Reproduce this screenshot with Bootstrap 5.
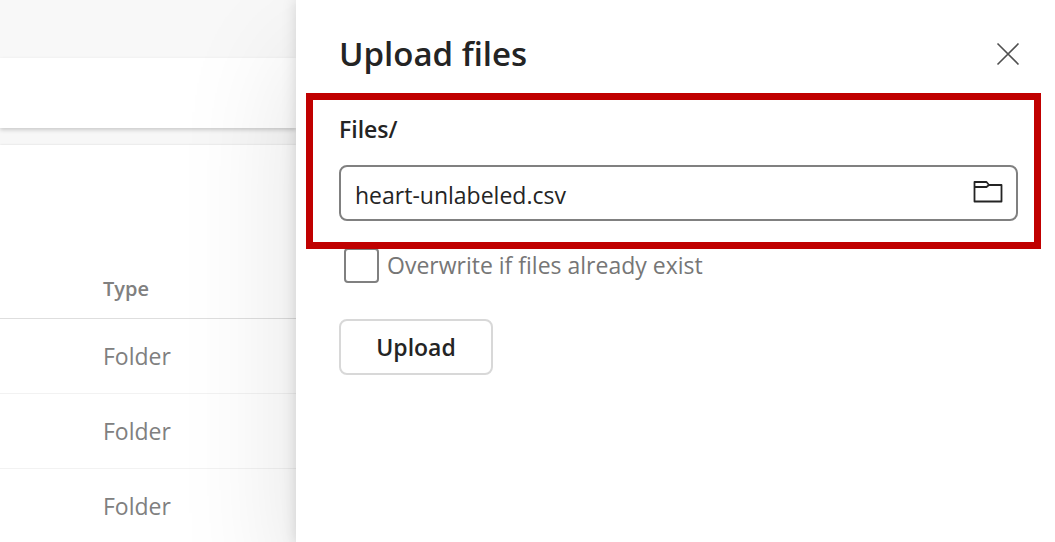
<!DOCTYPE html>
<html lang="en">
<head>
<meta charset="utf-8">
<meta name="viewport" content="width=device-width, initial-scale=1">
<title>Upload files</title>
<link href="https://cdn.jsdelivr.net/npm/bootstrap@5.3.0/dist/css/bootstrap.min.css" rel="stylesheet">
<style>
  body { font-family: "Open Sans", "Noto Sans", sans-serif; font-size: 23px; line-height: 32px; color: #242424; background: #fff; }
  .explorer { flex: 0 0 296px; }
  .topbar { height: 58px; background: #f8f8f8; }
  .toolbar { height: 70px; background: #fff; box-shadow: 0 2px 4px rgba(0,0,0,.18); }
  .gutter { height: 17px; background: #f7f7f7; }
  .file-pane { box-shadow: 0 0 2px rgba(0,0,0,.12); padding-top: 115px; }
  .file-table { table-layout: fixed; }
  .file-table td, .file-table th { height: 75px; padding: 0; vertical-align: middle; background: transparent; border-bottom: 1px solid #f2f2f2; color: #808080; }
  .file-table th { height: 58px; font-weight: 600; font-size: 20px; border-bottom-color: #dedede; }
  .file-table .name-col { width: 103px; }
  .drawer { background: #fff; box-shadow: 0 0 14px rgba(0,0,0,.14), 0 56px 112px rgba(0,0,0,.12); }
  .drawer-head { height: 93px; padding: 14px 34px 0 43px; }
  .drawer-title { font-size: 33px; line-height: 44px; font-weight: 600; }
  .close-btn { width: 26px; height: 26px; }
  .marked { border: 7px solid #c00000; margin: 0 14px 0 10px; padding: 13px 16px 21px 26px; }
  .path-label { font-weight: 600; margin-bottom: 20px; }
  .file-box { height: 56px; border: 2px solid #808080; border-radius: 8px; padding: 0 13px 0 14px; }
  .file-box input { font-size: 23px; line-height: 32px; color: #242424; padding: 3px 0 0; }
  .drawer-form { padding-left: 43px; }
  .overwrite { gap: 8px; color: #767676; height: 34px; margin: -1px 0 0 5px; }
  .overwrite .form-check-input { width: 35px; height: 35px; border: 2px solid #808080; border-radius: 4px; }
  .upload-btn { width: 154px; height: 56px; margin-top: 37px; border: 2px solid #d8d8d8; border-radius: 8px; background: #fff; font-size: 23px; font-weight: 600; color: #242424; }
</style>
</head>
<body>
<div class="d-flex min-vh-100 overflow-hidden">
  <main class="explorer">
    <div class="topbar"></div>
    <div class="toolbar position-relative"></div>
    <div class="gutter"></div>
    <section class="file-pane">
      <table class="table file-table mb-0">
        <thead><tr><th class="name-col"></th><th scope="col">Type</th></tr></thead>
        <tbody>
          <tr><td></td><td>Folder</td></tr>
          <tr><td></td><td>Folder</td></tr>
          <tr><td></td><td>Folder</td></tr>
        </tbody>
      </table>
    </section>
  </main>
  <aside class="drawer flex-fill position-relative">
    <header class="drawer-head d-flex align-items-center justify-content-between">
      <h1 class="drawer-title mb-0">Upload files</h1>
      <button type="button" class="close-btn btn border-0 p-0 d-flex" aria-label="Close">
        <svg width="26" height="26" viewBox="0 0 26 26" fill="none" stroke="#505050" stroke-width="1.6"><path d="M2.500 2.500l21 21M23.500 2.500l-21 21"/></svg>
      </button>
    </header>
    <form>
      <div class="marked position-relative z-1">
        <label class="path-label d-block" for="file">Files/</label>
        <div class="file-box d-flex align-items-center">
          <input id="file" type="text" class="form-control border-0 shadow-none bg-transparent" value="heart-unlabeled.csv">
          <button type="button" class="btn border-0 p-0 d-flex" aria-label="Browse">
            <svg width="30" height="24" viewBox="0 0 30 24" fill="none" stroke="#242424" stroke-width="1.800" stroke-linejoin="round"><path d="M1.500 1H13.500L16 4H28.500V20.500H1.500ZM1.500 6H13.500L16 4"/></svg>
          </button>
        </div>
      </div>
      <div class="drawer-form">
        <div class="overwrite d-flex align-items-center">
          <input class="form-check-input m-0 flex-shrink-0" type="checkbox" id="overwrite">
          <label for="overwrite">Overwrite if files already exist</label>
        </div>
        <button type="button" class="upload-btn btn p-0">Upload</button>
      </div>
    </form>
  </aside>
</div>
<script src="https://cdn.jsdelivr.net/npm/bootstrap@5.3.0/dist/js/bootstrap.bundle.min.js"></script>
</body>
</html>
